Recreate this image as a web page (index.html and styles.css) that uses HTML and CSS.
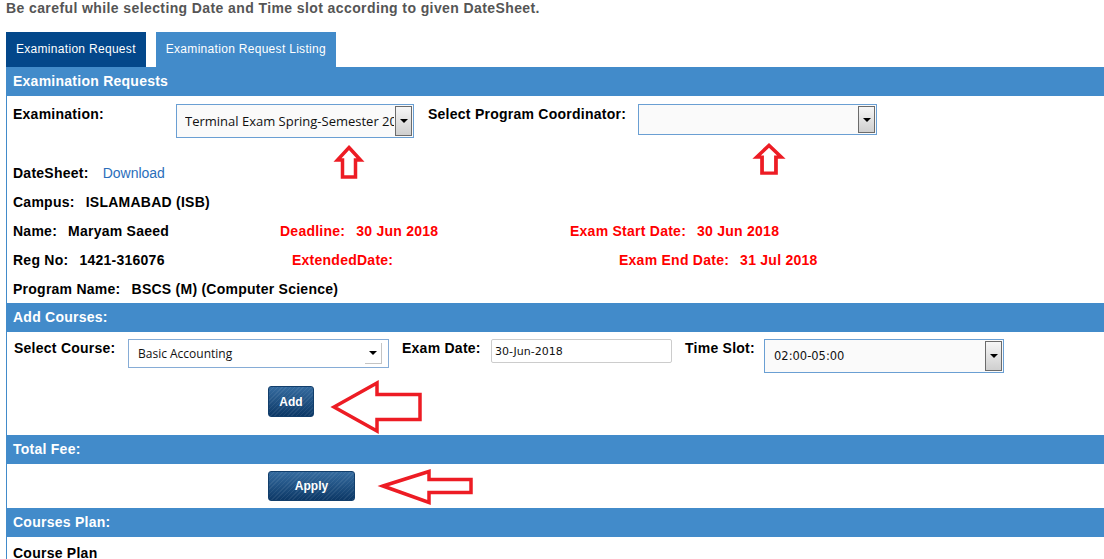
FILE: index.html
```html
<html>
<head>
	<title>Examination Request</title>
	<link rel="stylesheet" href="styles.css">
</head>
<body>
	<p class="notice">Be careful while selecting Date and Time slot according to given DateSheet.</p>

	<div class="tabs">
		<span class="tab active">Examination Request</span>
		<span class="tab">Examination Request Listing</span>
	</div>

	<div class="panel">
		<div class="head">Examination Requests</div>
		<div class="exam-row">
			<label class="lbl lbl-exam">Examination:</label>
			<div class="combo combo-exam">
				<select><option>Terminal Exam Spring-Semester 2018</option></select>
				<span class="drop"></span>
			</div>
			<label class="lbl lbl-coord">Select Program Coordinator:</label>
			<div class="combo combo-coord">
				<select><option></option></select>
				<span class="drop"></span>
			</div>
			<svg class="mark up-one" width="28" height="34" viewBox="0 0 28 34"><polygon points="14,2.5 25.5,15 20.5,15 20.5,32 7.5,32 7.5,15 2.5,15"/></svg>
			<svg class="mark up-two" width="30" height="32" viewBox="0 0 28 34" preserveAspectRatio="none"><polygon points="14,2.5 25.5,15 20.5,15 20.5,32 7.5,32 7.5,15 2.5,15"/></svg>
		</div>

		<div class="info">
			<div class="line"><span>DateSheet:</span><a href="#">Download</a></div>
			<div class="line"><span>Campus:</span><span class="val">ISLAMABAD (ISB)</span></div>
			<div class="line">
				<span class="c1">Name:<span class="val">Maryam Saeed</span></span>
				<span class="c2 red">Deadline:<span class="val">30 Jun 2018</span></span>
				<span class="red">Exam Start Date:<span class="val">30 Jun 2018</span></span>
			</div>
			<div class="line">
				<span class="c1-b">Reg No:<span class="val">1421-316076</span></span>
				<span class="c2-b red">ExtendedDate:</span>
				<span class="red">Exam End Date:<span class="val">31 Jul 2018</span></span>
			</div>
			<div class="line"><span>Program Name:</span><span class="val">BSCS (M) (Computer Science)</span></div>
		</div>

		<div class="head">Add Courses:</div>
		<div class="course-row">
			<label class="lbl lbl-course">Select Course:</label>
			<div class="combo combo-course">
				<select><option>Basic Accounting</option></select>
				<span class="drop-lite"></span>
			</div>
			<label class="lbl lbl-date">Exam Date:</label>
			<input class="date" type="text" value="30-Jun-2018">
			<label class="lbl lbl-slot">Time Slot:</label>
			<div class="combo combo-slot">
				<select><option>02:00-05:00</option></select>
				<span class="drop"></span>
			</div>
		</div>
		<div class="btn-row">
			<button class="btn btn-add">Add</button>
			<svg class="mark left-one" width="92" height="56" viewBox="0 0 92 56"><polygon points="2,28 45,4 45,15.5 88,15.5 88,40.5 45,40.5 45,52"/></svg>
		</div>

		<div class="head">Total Fee:</div>
		<div class="fee-row">
			<button class="btn btn-apply">Apply</button>
			<svg class="mark left-two" width="94" height="38" viewBox="0 0 94 38"><polygon points="2,18 48,3.5 48,11.5 90,11.5 90,24.5 48,24.5 48,34.5"/></svg>
		</div>

		<div class="head">Courses Plan:</div>
		<div class="plan">Course Plan</div>
	</div>
</body>
</html>
```

FILE: styles.css
```css
body{
	margin: 0;
	background: #fff;
	color: #000;
	font-family: "Liberation Sans", Arial, sans-serif;
}

.notice{
	margin: 0;
	padding-left: 6px;
	font-size: 14px;
	font-weight: bold;
	line-height: 16px;
	letter-spacing: 0.4px;
	color: #555;
}

/* tabs */
.tabs{
	display: flex;
	gap: 10px;
	margin: 16px 0 0 6px;
}
.tab{
	height: 35px;
	line-height: 35px;
	padding: 0 10px;
	font-size: 12px;
	letter-spacing: 0.3px;
	color: #fff;
	background: #428bca;
}
.tab.active{
	background: #03478a;
}

/* panel */
.panel{
	margin-left: 6px;
	border-left: 1px solid #428bca;
}
.head{
	height: 29px;
	line-height: 29px;
	padding-left: 6px;
	background: #428bca;
	color: #fff;
	font-size: 14px;
	font-weight: bold;
	letter-spacing: 0.25px;
}

.lbl{
	font-size: 14px;
	font-weight: bold;
	line-height: 16px;
	letter-spacing: 0.25px;
	margin-top: 2px;
}

.exam-row{
	position: relative;
	display: flex;
	align-items: flex-start;
	height: 62px;
	box-sizing: border-box;
	padding: 8px 0 0 6px;
}
.lbl-exam{ width: 163px; }
.lbl-coord{ width: 210px; margin-left: 14px; }

.combo{
	display: flex;
	box-sizing: border-box;
	border: 1px solid #6a9fd3;
	background: #fafafa;
}
.combo select{
	flex: 1;
	min-width: 0;
	appearance: none;
	-webkit-appearance: none;
	border: 0;
	outline: none;
	background: transparent;
	color: #111;
	font-family: "Open Sans", sans-serif;
	font-size: 13px;
	padding: 0 0 0 8px;
}
.combo-exam{ width: 238px; height: 34px; }
.combo-coord{ width: 239px; height: 31px; }
.combo-course{ width: 261px; height: 29px; background: #fff; border-color: #86acd6; }
.combo-course select{ font-size: 12px; padding-left: 9px; }
.combo-slot{ width: 240px; height: 34px; }
.combo-slot select{ font-family: "DejaVu Sans", sans-serif; font-size: 11.5px; padding-left: 9px; }

.drop{
	width: 15px;
	margin: 1px;
	border: 1px solid #6b6b6b;
	background: linear-gradient(#f6f6f6, #cfcfcf);
	display: flex;
	align-items: center;
	justify-content: center;
}
.drop::after, .drop-lite::after{
	content: "";
	border-left: 4px solid transparent;
	border-right: 4px solid transparent;
	border-top: 4px solid #000;
}
.drop-lite{
	width: 16px;
	margin: 3px 6px 3px 0;
	border-right: 1px solid #c4c4c4;
	border-bottom: 1px solid #c4c4c4;
	display: flex;
	align-items: center;
	justify-content: center;
}

/* info lines */
.info{
	padding-left: 6px;
}
.line{
	display: flex;
	align-items: center;
	height: 29px;
	font-size: 14px;
	font-weight: bold;
	letter-spacing: 0.25px;
}
.line a{
	margin-left: 14px;
	font-weight: normal;
	letter-spacing: 0;
	color: #2a6ebb;
	text-decoration: none;
}
.val{ margin-left: 11px; }
.red{ color: #f00; }
.c1{ width: 267px; }
.c2{ width: 290px; }
.c1-b{ width: 279px; }
.c2-b{ width: 327px; }

/* add courses */
.course-row{
	display: flex;
	align-items: flex-start;
	padding: 7px 0 0 7px;
}
.course-row .lbl{ margin-top: 1px; }
.lbl-course{ width: 114px; }
.lbl-date{ width: 89px; margin-left: 13px; }
.lbl-slot{ width: 79px; margin-left: 13px; }
.date{
	width: 181px;
	height: 24px;
	box-sizing: border-box;
	border: 1px solid #ccc;
	border-radius: 2px;
	padding: 0 3px;
	font-family: "DejaVu Sans", sans-serif;
	font-size: 11px;
	color: #111;
}

.btn{
	display: block;
	box-sizing: border-box;
	height: 31px;
	padding: 0;
	border: 1px solid #123e6b;
	border-radius: 3px;
	color: #fff;
	font-family: "Liberation Sans", Arial, sans-serif;
	font-size: 12px;
	font-weight: bold;
	background:
		repeating-linear-gradient(135deg, rgba(255,255,255,0.07) 0 1px, transparent 1px 3px),
		linear-gradient(#356b9f, #0c3866);
}
.btn-add{ width: 46px; }
.btn-apply{ width: 87px; height: 30px; }

.btn-row{
	position: relative;
	padding: 13px 0 18px 261px;
}
.fee-row{
	position: relative;
	padding: 7px 0 7px 261px;
}

.plan{
	padding: 8px 0 0 6px;
	font-size: 14px;
	font-weight: bold;
	line-height: 16px;
	letter-spacing: 0.25px;
}

/* red hand-drawn markers */
.mark{
	position: absolute;
	overflow: visible;
}
.mark polygon{
	fill: none;
	stroke: #ed1c24;
	stroke-width: 3.5;
}
.up-one{ left: 328px; top: 49px; }
.up-two{ left: 747px; top: 47px; }
.left-one{ left: 325px; top: 6px; }
.left-two{ left: 374px; top: 4px; }
```
